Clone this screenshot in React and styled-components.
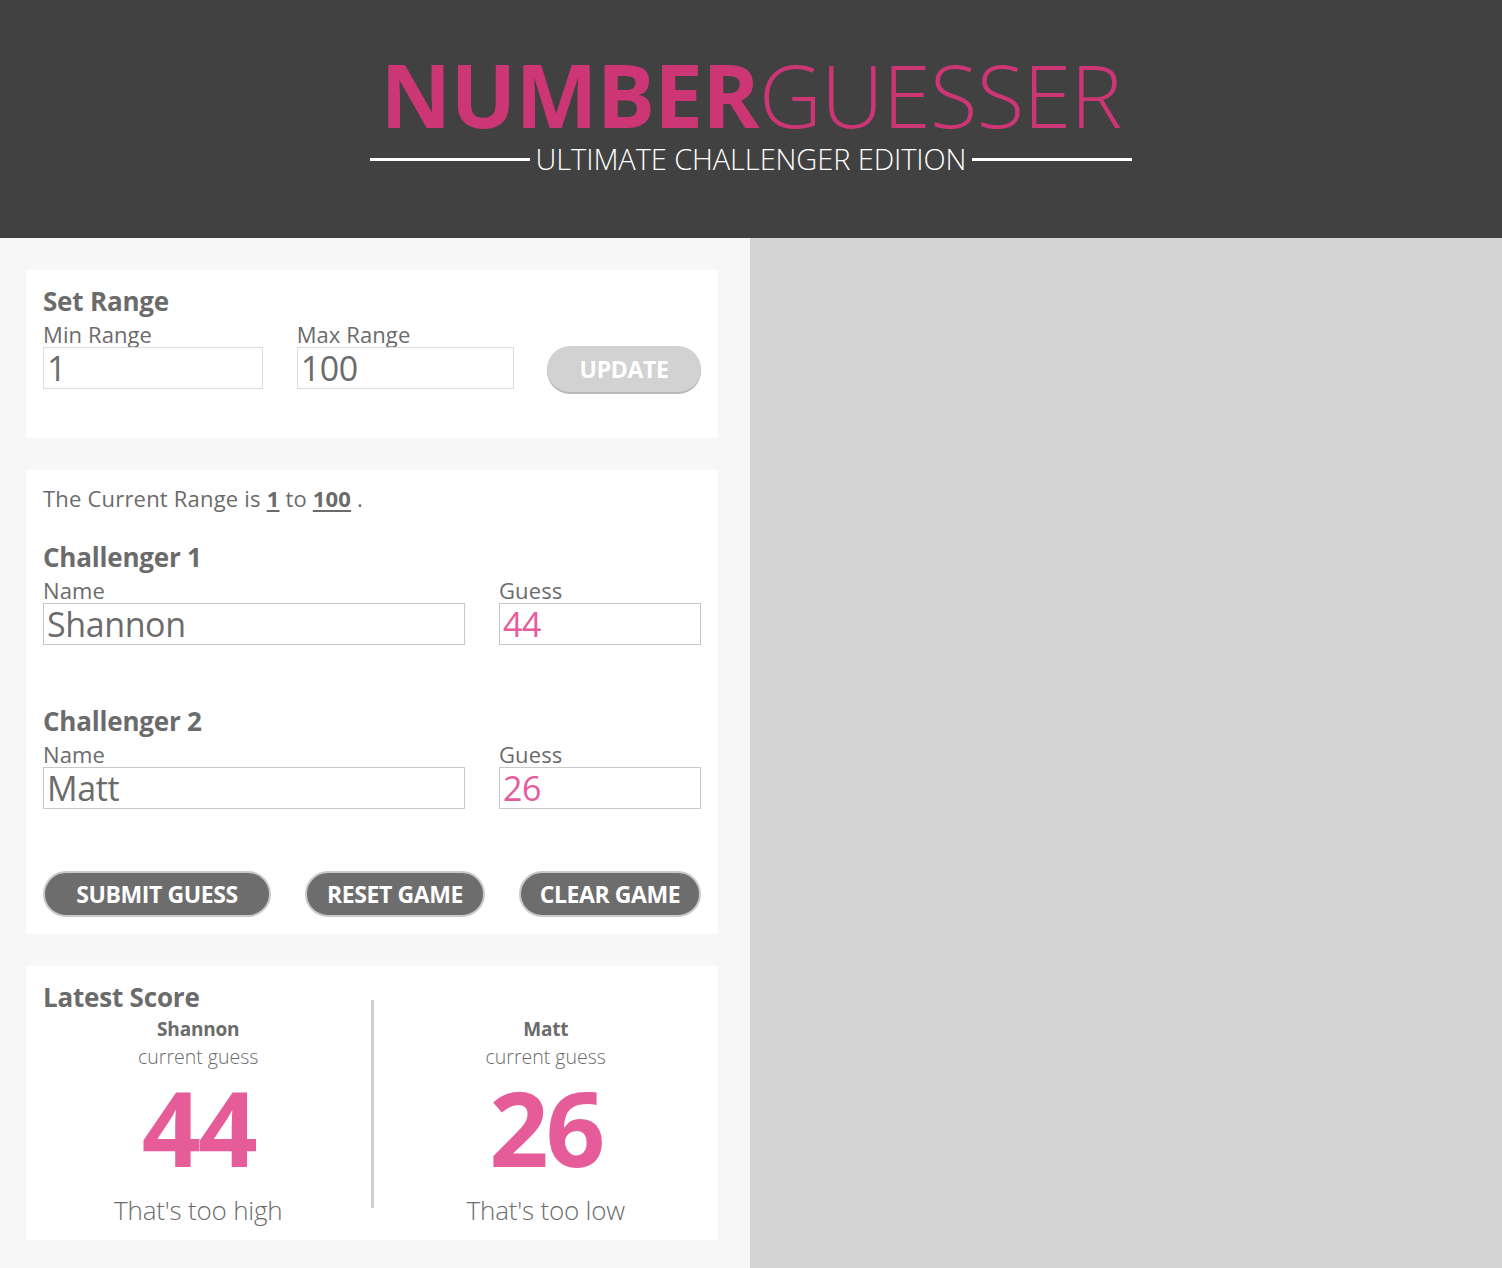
import React from "react";
import styled, { createGlobalStyle } from "styled-components";

const Global = createGlobalStyle`
  html, body { margin: 0; padding: 0; }
  body { font-family: "Open Sans", "Liberation Sans", sans-serif; color: #6b6b6b; background: #d4d4d4; }
  * { box-sizing: border-box; }
`;

const Header = styled.header`
  height: 238px;
  background: #414141;
  display: flex;
  flex-direction: column;
  align-items: center;
  padding-top: 49px;
`;

const Title = styled.h1`
  margin: 0;
  font-size: 87px;
  line-height: 90px;
  color: #cc3674;
  font-weight: 300;
  letter-spacing: -0.8px;
  & b { font-weight: 700; }
`;

const SubRow = styled.div`
  display: flex;
  align-items: center;
  gap: 6px;
  margin-top: 2px;
`;

const Rule = styled.span`
  width: 160px;
  height: 3px;
  background: #ffffff;
`;

const Subtitle = styled.span`
  color: #ffffff;
  font-size: 29px;
  font-weight: 300;
  line-height: 36px;
  letter-spacing: -0.1px;
`;

const Main = styled.main`
  display: grid;
  grid-template-columns: 750px 1fr;
  min-height: 1030px;
`;

const LeftCol = styled.section`
  background: #f7f7f7;
  padding: 32px 32px 28px 26px;
  display: flex;
  flex-direction: column;
  gap: 32px;
`;

const RightCol = styled.section`
  background: #d4d4d4;
`;

const Card = styled.div`
  background: #ffffff;
  padding: ${(p) => p.$pad || "16px 17px"};
`;

const H2 = styled.h2`
  margin: 0 0 4px ${(p) => p.$indent || 0}px;
  font-size: 26px;
  font-weight: 700;
  line-height: 32px;
  color: #6b6b6b;
  letter-spacing: -0.2px;
`;

const RangeRow = styled.div`
  display: flex;
  align-items: flex-end;
`;

const Field = styled.label`
  display: flex;
  flex-direction: column;
  width: ${(p) => p.$w}px;
  margin-right: ${(p) => p.$mr || 0}px;
`;

const Label = styled.span`
  font-size: 22px;
  line-height: 26px;
  color: #6b6b6b;
  letter-spacing: 0.1px;
`;

const Input = styled.input`
  width: 100%;
  height: 42px;
  border: 1px solid ${(p) => p.$border || "#c8c8c8"};
  font-family: inherit;
  font-size: 34px;
  padding: 0 0 0 3px;
  color: ${(p) => (p.$pink ? "#e65c9c" : "#6b6b6b")};
  background: #fff;
  outline: none;
  letter-spacing: -0.4px;
`;

const UpdateButton = styled.button`
  width: 154px;
  height: 46px;
  border-radius: 23px;
  border: none;
  background: #d2d2d2;
  box-shadow: 0 2px 0 #b9b9b9;
  color: #ffffff;
  font-family: inherit;
  font-weight: 700;
  font-size: 23px;
  letter-spacing: -0.3px;
  margin-bottom: -3px;
  padding: 0;
`;

const RangeText = styled.p`
  margin: 0;
  font-size: 22px;
  line-height: 28px;
  letter-spacing: 0.2px;
  & u { font-weight: 700; text-decoration-thickness: 2px; text-underline-offset: 3px; }
`;

const Challenger = styled.div`
  margin-top: ${(p) => p.$mt}px;
`;

const PlayerRow = styled.div`
  display: flex;
  align-items: flex-end;
`;

const ButtonRow = styled.div`
  display: flex;
  justify-content: space-between;
  margin-top: 62px;
`;

const GameButton = styled.button`
  width: ${(p) => p.$w}px;
  height: 46px;
  border-radius: 23px;
  border: 2px solid #c9c9c9;
  background: #6d6d6d;
  color: #ffffff;
  font-family: inherit;
  font-weight: 700;
  font-size: 23px;
  letter-spacing: -0.4px;
  padding: 0;
`;

const ScoreGrid = styled.div`
  display: grid;
  grid-template-columns: 1fr 3px 1fr;
  margin-top: -20px;
`;

const Divider = styled.div`
  background: #cfcfcf;
  margin-top: 3px;
  height: 208px;
`;

const ScoreCol = styled.div`
  display: flex;
  flex-direction: column;
  align-items: center;
  padding-top: 19px;
`;

const ScoreName = styled.div`
  font-weight: 700;
  font-size: 19px;
  line-height: 26px;
  letter-spacing: -0.2px;
`;

const ScoreSub = styled.div`
  font-weight: 300;
  font-size: 19.5px;
  line-height: 26px;
  margin-top: 2px;
  letter-spacing: 0px;
`;

const BigNum = styled.div`
  font-weight: 700;
  font-size: 104px;
  line-height: 104px;
  color: #e65c99;
  margin-top: 5px;
  letter-spacing: -3px;
`;

const Verdict = styled.div`
  font-weight: 300;
  font-size: 26px;
  line-height: 34px;
  margin-top: 14px;
  letter-spacing: -0.2px;
`;

const players = [
  { n: 1, name: "Shannon", guess: "44", verdict: "That's too high" },
  { n: 2, name: "Matt", guess: "26", verdict: "That's too low" },
];

export default function App() {
  return (
    <>
      <Global />
      <Header>
        <Title>
          <b>NUMBER</b>GUESSER
        </Title>
        <SubRow>
          <Rule />
          <Subtitle>ULTIMATE CHALLENGER EDITION</Subtitle>
          <Rule />
        </SubRow>
      </Header>
      <Main>
        <LeftCol>
          <Card $pad="15px 17px 49px">
            <H2>Set Range</H2>
            <RangeRow>
              <Field $w={220} $mr={34}>
                <Label>Min Range</Label>
                <Input defaultValue="1" $border="#dddddd" />
              </Field>
              <Field $w={218} $mr={33}>
                <Label>Max Range</Label>
                <Input defaultValue="100" $border="#dddddd" />
              </Field>
              <UpdateButton>UPDATE</UpdateButton>
            </RangeRow>
          </Card>

          <Card $pad="14px 17px 17px">
            <RangeText>
              The Current Range is <u>1</u> to <u>100</u> .
            </RangeText>
            {players.map((p, i) => (
              <Challenger key={p.n} $mt={i === 0 ? 29 : 60}>
                <H2>Challenger {p.n}</H2>
                <PlayerRow>
                  <Field $w={422} $mr={34}>
                    <Label>Name</Label>
                    <Input defaultValue={p.name} />
                  </Field>
                  <Field $w={202}>
                    <Label>Guess</Label>
                    <Input defaultValue={p.guess} $pink />
                  </Field>
                </PlayerRow>
              </Challenger>
            ))}
            <ButtonRow>
              <GameButton $w={228}>SUBMIT GUESS</GameButton>
              <GameButton $w={180}>RESET GAME</GameButton>
              <GameButton $w={182}>CLEAR GAME</GameButton>
            </ButtonRow>
          </Card>

          <Card $pad="15px 0 13px">
            <H2 $indent={17}>Latest Score</H2>
            <ScoreGrid>
              <ScoreCol>
                <ScoreName>{players[0].name}</ScoreName>
                <ScoreSub>current guess</ScoreSub>
                <BigNum>{players[0].guess}</BigNum>
                <Verdict>{players[0].verdict}</Verdict>
              </ScoreCol>
              <Divider />
              <ScoreCol>
                <ScoreName>{players[1].name}</ScoreName>
                <ScoreSub>current guess</ScoreSub>
                <BigNum>{players[1].guess}</BigNum>
                <Verdict>{players[1].verdict}</Verdict>
              </ScoreCol>
            </ScoreGrid>
          </Card>
        </LeftCol>
        <RightCol />
      </Main>
    </>
  );
}
